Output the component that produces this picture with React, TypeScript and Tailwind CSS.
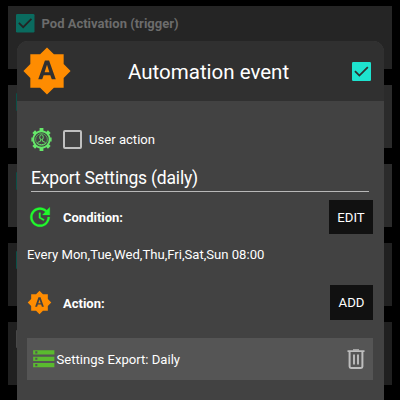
import React from 'react';

const STAR =
  'M10.85 12.65h2.3L12 9l-1.15 3.65zM20 8.69V4h-4.69L12 .69 8.69 4H4v4.69L.69 12 4 15.31V20h4.69L12 23.31 15.31 20H20v-4.69L23.31 12 20 8.69zM14.3 16l-.7-2h-3.2l-.7 2H7.8L11 7h2l3.2 9h-1.9z';

function AutoIcon({ className }: { className: string }) {
  return (
    <svg viewBox="0 0 24 24" className={className} fill="#fe8c01">
      <path d={STAR} />
    </svg>
  );
}

function Checked({ className, box, tick }: { className: string; box: string; tick: string }) {
  return (
    <svg viewBox="0 0 18 18" className={className}>
      <rect width="18" height="18" rx="1.2" fill={box} />
      <path d="M2.8 8.6l4.2 4.2L15 4.8" fill="none" stroke={tick} strokeWidth="1.7" />
    </svg>
  );
}

function UserGear() {
  return (
    <svg viewBox="0 0 21 23" className="h-[23px] w-[21px] shrink-0" fill="none" stroke="#66e86a">
      <g strokeWidth="3.8">
        <path d="M10.5 0v3M10.5 20V23" />
        <path d="M2.7 3.7l2 2M18.3 3.7l-2 2M2.7 19.3l2-2M18.3 19.3l-2-2" />
        <path d="M.4 11.5h1.5M19.1 11.5h1.5" />
      </g>
      <circle cx="10.5" cy="11.5" r="8.2" strokeWidth="1.9" />
      <circle cx="10.5" cy="11.5" r="5.9" strokeWidth=".6" />
      <ellipse cx="10.5" cy="9.2" rx="1.8" ry="2.4" strokeWidth=".9" />
      <path
        d="M9.6 11.4v1.8l-2.3.9c-.9.4-1 1.4-1 1.4 2.200 1.500 6.200 1.500 8.400 0 0 0-.1-1-1-1.400l-2.300-.9v-1.800"
        strokeWidth=".9"
      />
    </svg>
  );
}

function UpdateIcon() {
  return (
    <svg viewBox="0 0 24 24" className="h-[26px] w-[26px] shrink-0" fill="#20fa2c" stroke="#20fa2c" strokeWidth=".25">
      <path d="M21 10.12h-6.78l2.74-2.82c-2.73-2.7-7.15-2.8-9.88-.1-2.73 2.71-2.73 7.08 0 9.79s7.15 2.71 9.88 0C18.32 15.65 19 14.08 19 12.1h2c0 1.98-.88 4.55-2.64 6.29-3.51 3.48-9.21 3.48-12.72 0-3.5-3.47-3.53-9.11-.02-12.58s9.14-3.47 12.65 0L21 3v7.12zM12.5 8v4.25l3.5 2.08-.72 1.21L11 13V8h1.5z" />
    </svg>
  );
}

function StorageIcon() {
  return (
    <svg viewBox="0 0 24 24" className="h-[25.5px] w-[25.5px] shrink-0" fill="#5aba2f">
      <path d="M2 20h20v-4H2v4zm2-3h2v2H4v-2zM2 4v4h20V4H2zm4 3H4V5h2v2zm-4 7h20v-4H2v4zm2-3h2v2H4v-2z" />
    </svg>
  );
}

function TrashIcon() {
  return (
    <svg viewBox="0 0 18 20" className="h-5 w-[18px] shrink-0" fill="none" stroke="#bdbdbd">
      <path d="M.5 2.2h17" strokeWidth="1.8" />
      <path d="M6 .9h6" strokeWidth="1.4" />
      <path d="M2.6 2.5v15q0 1.4 1.4 1.4h10q1.4 0 1.4-1.4v-15" strokeWidth="2" />
      <path d="M7 5.5v10M11 5.5v10" strokeWidth="1.9" />
    </svg>
  );
}

export default function App() {
  return (
    <div className="relative h-[400px] w-[400px] overflow-hidden bg-black font-['Roboto',sans-serif]">
      <div className="flex flex-col gap-[16.6px] px-2 pt-1.5">
        <div className="flex h-[62.5px] shrink-0 items-start bg-[#252525] pl-2 pt-2">
          <Checked className="h-[18.5px] w-[18.5px]" box="#0a6b5f" tick="#242424" />
          <span className="ml-[7px] mt-[1px] whitespace-nowrap text-[13px] font-bold leading-[18px] text-[#6c6c6c]">
            Pod Activation (trigger)
          </span>
        </div>
        <div className="h-[62.5px] shrink-0 bg-[#2b2b2b] pl-2 pt-2">
          <div className="h-[18px] w-[19px] rounded-[1px] bg-[#0a5148]" />
        </div>
        <div className="h-[62.5px] shrink-0 bg-[#2b2b2b] pl-2 pt-2">
          <div className="h-[18px] w-[19px] rounded-[1px] bg-[#0a5148]" />
        </div>
        <div className="h-[62.5px] shrink-0 bg-[#212121] pl-2 pt-2">
          <div className="h-[18px] w-[19px] rounded-[1px] bg-[#0a5148]" />
        </div>
        <div className="h-[62.5px] shrink-0 bg-[#202020] pl-2 pt-2">
          <div className="h-[18px] w-[19px] rounded-[1px] border-2 border-[#484848]" />
        </div>
      </div>

      <div className="absolute left-[17px] top-[41px] flex h-[359px] w-[366.5px] flex-col overflow-hidden rounded-t-[11px] bg-[#424242] text-white">
        <div className="flex h-[60px] shrink-0 items-center bg-[#303030] pl-[5px] pr-[12.5px]">
          <AutoIcon className="h-[50px] w-[50px] shrink-0" />
          <h1 className="flex-1 whitespace-nowrap pl-[56px] pt-[2px] text-[20.5px] leading-6">Automation event</h1>
          <Checked className="h-[19px] w-[19px] shrink-0" box="#1ee3cf" tick="#303030" />
        </div>

        <div className="flex h-[60px] shrink-0 items-end pl-[14px]">
          <div className="flex h-[43.5px] items-center">
            <UserGear />
            <div className="ml-[10.5px] h-[19px] w-[19px] rounded-[2px] border-2 border-[#c0c0c0]" />
            <span className="ml-[7.5px] pt-[1px] text-[13.1px]">User action</span>
          </div>
        </div>

        <div className="ml-[14px] mr-[14.5px] flex h-[30.5px] shrink-0 items-center border-b border-[#b8b8b8] pt-[5px] text-[17.5px] tracking-[-0.19px]">
          Export Settings (daily)
        </div>

        <div className="mt-[8.5px] flex h-[34px] shrink-0 items-center pl-[10px] pr-[10.5px]">
          <UpdateIcon />
          <span className="ml-[10px] flex-1 pt-[2px] text-[13px] font-bold">Condition:</span>
          <button className="h-[34px] w-[44px] bg-[#111111] pt-[2px] text-[13.2px]">EDIT</button>
        </div>

        <div className="mt-[12px] flex h-[16px] shrink-0 items-center pl-[10px] pt-[1px] text-[13.1px]">
          Every Mon,Tue,Wed,Thu,Fri,Sat,Sun 08:00
        </div>

        <div className="mt-[23px] flex h-[34.5px] shrink-0 items-center pl-[10px] pr-[10.5px]">
          <AutoIcon className="h-[25px] w-[25px] shrink-0" />
          <span className="ml-[11px] flex-1 pt-[2px] text-[13px] font-bold">Action:</span>
          <button className="h-[34.5px] w-[43px] bg-[#111111] pt-[2px] text-[13.2px]">ADD</button>
        </div>

        <div className="ml-[10px] mr-[10.5px] mt-[18.5px] flex h-[42px] shrink-0 items-center bg-[#555555] pl-[4px] pr-[8px]">
          <StorageIcon />
          <span className="flex-1 pt-[1px] text-[13.1px]">Settings Export: Daily</span>
          <TrashIcon />
        </div>
      </div>
    </div>
  );
}
